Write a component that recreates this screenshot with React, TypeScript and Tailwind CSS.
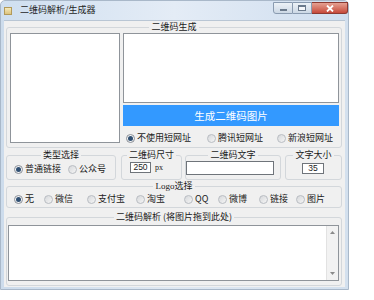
import React from "react";

const FONT = "font-['Noto_Sans_CJK_SC','Noto_Sans_CJK_JP',sans-serif]";

function Radio({ checked }: { checked?: boolean }) {
  return checked ? (
    <span className="w-[9px] h-[9px] rounded-full border border-[#8a8f96] bg-[#f3f4f6] flex items-center justify-center shrink-0">
      <span className="w-[5px] h-[5px] rounded-full bg-[#2f4f72]" />
    </span>
  ) : (
    <span className="w-[9px] h-[9px] rounded-full border border-[#b8bcc2] bg-gradient-to-br from-[#d6d8db] to-[#f5f5f5] shrink-0" />
  );
}

function Item({ label, checked, w }: { label: string; checked?: boolean; w?: string }) {
  return (
    <div className={`flex items-center shrink-0 ${w ?? ""}`}>
      <Radio checked={checked} />
      <span className="ml-[2px] text-[9px] leading-[12px] text-[#1a1a1a] whitespace-nowrap">{label}</span>
    </div>
  );
}

function Legend({ children }: { children: React.ReactNode }) {
  return (
    <legend className="mx-auto px-[2px] text-[9px] leading-[12px] text-[#1a1a1a] whitespace-nowrap">
      {children}
    </legend>
  );
}

export default function App() {
  return (
    <div className={`w-[374px] h-[300px] bg-white overflow-hidden ${FONT}`}>
      <div className="w-[349px] h-[290px] flex flex-col rounded-t-[5px] bg-gradient-to-r from-[#cddcec] via-[#dfe8f2] to-[#d3e0ee] border border-[#a9b8c9]">
        {/* Title bar */}
        <div className="h-[19px] flex items-start bg-gradient-to-r from-[#cfdff0] via-[#e4ecf6] to-[#cfdeef] rounded-t-[5px]">
          <div className="ml-[3px] mt-[6px] w-[8px] h-[8px] border border-[#b29a5a] bg-gradient-to-b from-[#f6e9b8] to-[#dcc47e]" />
          <span className="ml-[8px] mt-[3px] text-[9px] leading-[12px] text-[#1e1e1e]">二维码解析/生成器</span>
          <div className="ml-auto mt-[1px] mr-[0px] flex h-[12px]">
            <div className="w-[20px] h-[12px] border border-[#8a9bb0] rounded-bl-[3px] bg-gradient-to-b from-[#edf2f7] to-[#ccd8e5] flex items-center justify-center">
              <span className="w-[7px] h-[2px] mt-[3px] bg-[#f8fafc] border border-[#6b7a8c]" />
            </div>
            <div className="w-[19px] h-[12px] border-y border-r border-[#8a9bb0] bg-gradient-to-b from-[#edf2f7] to-[#ccd8e5] flex items-center justify-center">
              <span className="w-[8px] h-[6px] border border-[#6b7a8c] border-t-2 bg-[#f5f7fa]" />
            </div>
            <div className="w-[36px] h-[12px] border-y border-r border-[#8c3a32] rounded-br-[3px] bg-gradient-to-b from-[#e4a092] to-[#c6483a] flex items-center justify-center">
              <svg width="8" height="7" viewBox="0 0 8 7">
                <path d="M1 0.5 L7 6.5 M7 0.5 L1 6.5" stroke="#ffffff" strokeWidth="1.8" />
              </svg>
            </div>
          </div>
        </div>

        {/* Client area */}
        <div className="ml-[3px] mr-[3px] h-[267px] bg-[#f0f0f0] border-t border-[#b9c6d4] flex flex-col pl-[2px]">
          {/* Group 1 */}
          <fieldset className="mt-[0px] w-[336px] h-[127px] border border-[#d3d7db] rounded-[3px]">
            <Legend>二维码生成</Legend>
            <div className="flex pl-[3px]">
              <div className="w-[110px] h-[110px] bg-white border border-[#8f949a]" />
              <div className="ml-[3px] w-[216px] flex flex-col">
                <div className="h-[70px] bg-white border border-[#8f949a]" />
                <div className="mt-[2px] h-[21px] bg-[#3399ff] flex items-center justify-center">
                  <span className="text-[10.5px] leading-[12px] text-white">生成二维码图片</span>
                </div>
                <div className="mt-[6px] h-[12px] flex items-center pl-[3px]">
                  <Item label="不使用短网址" checked w="w-[81px]" />
                  <Item label="腾讯短网址" w="w-[70px]" />
                  <Item label="新浪短网址" />
                </div>
              </div>
            </div>
          </fieldset>

          {/* Row 2 */}
          <div className="mt-[1px] flex h-[31px]">
            <fieldset className="w-[110px] h-[31px] border border-[#d3d7db] rounded-[3px]">
              <Legend>类型选择</Legend>
              <div className="mt-[2px] h-[12px] flex items-center pl-[7px]">
                <Item label="普通链接" checked w="w-[54px]" />
                <Item label="公众号" />
              </div>
            </fieldset>
            <fieldset className="ml-[5px] w-[61px] h-[31px] border border-[#d3d7db] rounded-[3px]">
              <Legend>二维码尺寸</Legend>
              <div className="mt-[1px] flex items-center">
                <div className="ml-[8px] w-[21px] h-[11px] bg-white border border-[#6f747a] flex items-center justify-center text-[8.5px] leading-[9px] text-[#1a1a1a] font-['Liberation_Sans',sans-serif]">
                  250
                </div>
                <span className="ml-[4px] text-[8px] leading-[10px] text-[#1a1a1a] font-['Liberation_Serif',serif]">px</span>
              </div>
            </fieldset>
            <fieldset className="ml-[3px] w-[96px] h-[31px] border border-[#d3d7db] rounded-[3px]">
              <Legend>二维码文字</Legend>
              <div className="ml-[0px] w-[88px] h-[14px] bg-white border border-[#6f747a]" />
            </fieldset>
            <fieldset className="ml-[4px] w-[57px] h-[31px] border border-[#d3d7db] rounded-[3px]">
              <Legend>文字大小</Legend>
              <div className="mt-[2px] ml-[16px] w-[22px] h-[11px] bg-white border border-[#6f747a] flex items-center justify-center text-[8.5px] leading-[9px] text-[#1a1a1a] font-['Liberation_Sans',sans-serif]">
                35
              </div>
            </fieldset>
          </div>

          {/* Logo group */}
          <fieldset className="w-[336px] h-[28px] border border-[#d3d7db] rounded-[3px]">
            <Legend>
              <span className="font-['Liberation_Serif',serif]">Logo</span>选择
            </Legend>
            <div className="mt-[1px] h-[12px] flex items-center pl-[7px]">
              <Item label="无" checked w="w-[30px]" />
              <Item label="微信" w="w-[43px]" />
              <Item label="支付宝" w="w-[49px]" />
              <Item label="淘宝" w="w-[48px]" />
              <Item label="QQ" w="w-[34px]" />
              <Item label="微博" w="w-[41px]" />
              <Item label="链接" w="w-[37px]" />
              <Item label="图片" />
            </div>
          </fieldset>

          {/* Parse group */}
          <fieldset className="mt-[3px] w-[336px] h-[75px] border border-[#d3d7db] rounded-[3px]">
            <Legend>二维码解析 (将图片拖到此处)</Legend>
            <div className="mt-[2px] ml-[1px] w-[331px] h-[56px] bg-white border border-[#8f949a] flex justify-end">
              <div className="w-[12px] h-full bg-[#f2f2f2] border-l border-[#e2e2e2] flex flex-col items-center justify-between py-[5px]">
                <svg width="5" height="3" viewBox="0 0 5 3"><path d="M0 3 L2.5 0 L5 3 Z" fill="#8a8a8a" /></svg>
                <svg width="5" height="3" viewBox="0 0 5 3"><path d="M0 0 L2.5 3 L5 0 Z" fill="#8a8a8a" /></svg>
              </div>
            </div>
          </fieldset>
        </div>
      </div>
    </div>
  );
}
